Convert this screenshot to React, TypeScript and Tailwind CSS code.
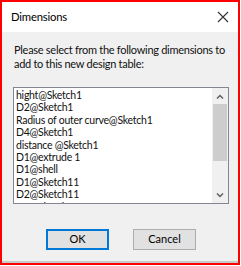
const items = [
  "hight@Sketch1",
  "D2@Sketch1",
  "Radius of outer curve@Sketch1",
  "D4@Sketch1",
  "distance @Sketch1",
  "D1@extrude 1",
  "D1@shell",
  "D1@Sketch11",
  "D2@Sketch11",
  "D3@Sketch11",
];

const App = () => {
  return (
    <div className="w-[241px] h-[266px] bg-white" style={{ fontFamily: 'Lato, "Noto Sans", sans-serif' }}>
      <div className="w-[240px] h-[265px] border-2 border-[#ff0000] flex flex-col bg-[#f0f0f0]">
        <div className="h-[30px] bg-white flex items-center justify-between pl-[9px] pr-[8px] shrink-0">
          <span className="text-[11.3px] tracking-[-0.2px] text-black">Dimensions</span>
          <svg width="12" height="12" viewBox="0 0 12 12" className="mr-[1px]">
            <path d="M1 1 L11 11 M11 1 L1 11" stroke="#333" strokeWidth="1.1" fill="none" />
          </svg>
        </div>
        <div className="flex-1 flex flex-col px-[11px] pt-[11px]">
          <p className="text-[11px] tracking-[-0.28px] leading-[14px] text-[#111] pl-[1px] whitespace-nowrap">
            Please select from the following dimensions to
            <br />
            add to this new design table:
          </p>
          <div className="mt-[16px] h-[117px] w-[216px] border border-[#828790] bg-white flex overflow-hidden">
            <div className="flex-1 pt-[1px] pl-[2px] overflow-hidden">
              {items.map((item, i) => (
                <div key={i} className="text-[10.5px] tracking-[-0.25px] leading-[12.4px] text-[#111] whitespace-nowrap">
                  {item}
                </div>
              ))}
            </div>
            <div className="w-[16px] bg-[#f0f0f0] flex flex-col">
              <div className="h-[16px] flex items-center justify-center">
                <svg width="8" height="5" viewBox="0 0 8 5">
                  <path d="M1 4.5 L4 1.5 L7 4.5" stroke="#606060" strokeWidth="1.5" fill="none" />
                </svg>
              </div>
              <div className="h-[57px] mx-[1px] bg-[#cdcdcd]" />
              <div className="flex-1" />
              <div className="h-[16px] flex items-center justify-center">
                <svg width="8" height="5" viewBox="0 0 8 5">
                  <path d="M1 0.5 L4 3.5 L7 0.5" stroke="#606060" strokeWidth="1.5" fill="none" />
                </svg>
              </div>
            </div>
          </div>
          <div className="flex gap-[24px] pl-[33px] mt-[25px]">
            <button className="w-[63px] h-[21px] bg-[#e1e1e1] border-2 border-[#0078d7] text-[11px] text-black flex items-center justify-center">
              OK
            </button>
            <button className="w-[63px] h-[21px] bg-[#e1e1e1] border border-[#adadad] text-[11px] text-black flex items-center justify-center">
              Cancel
            </button>
          </div>
        </div>
        <div className="h-[2px] bg-[#c8c8c8] shrink-0" />
      </div>
    </div>
  );
};

export default App;
